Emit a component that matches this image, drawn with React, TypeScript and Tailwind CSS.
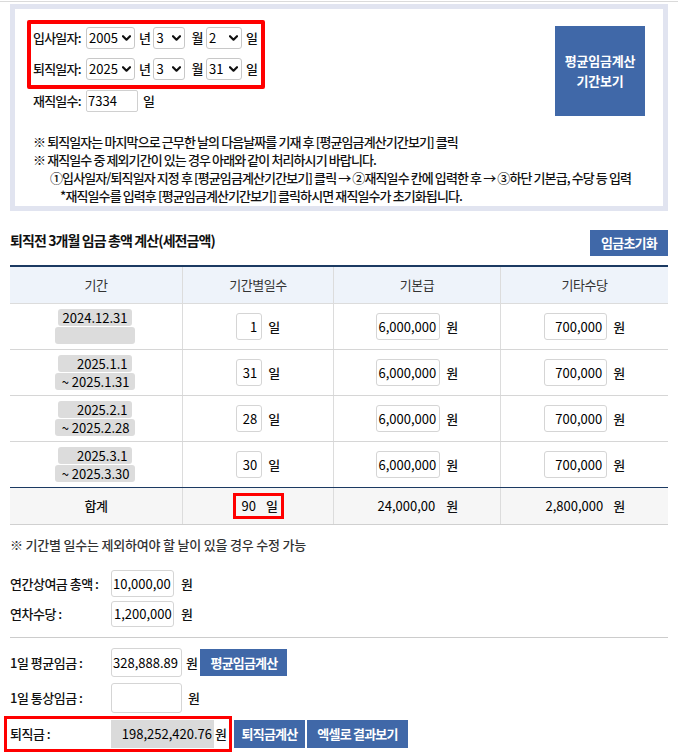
import React from "react";

const Chevron = () => (
  <svg className="absolute right-[4px] top-[8px] pointer-events-none" width="9" height="6" viewBox="0 0 9 6">
    <path d="M1 1.2 L4.5 4.7 L8 1.2" fill="none" stroke="#111" strokeWidth="2.2" strokeLinecap="round" strokeLinejoin="round" />
  </svg>
);

function Sel({ className, value }: { className: string; value: string }) {
  return (
    <div className={"relative h-[22px] " + className}>
      <div className="w-full h-full border border-[#c8c8c8] rounded-[3px] bg-white pl-[2px] text-[13px] font-normal tracking-normal leading-[20px] text-black">
        {value}
      </div>
      <Chevron />
    </div>
  );
}

const rows = [
  { a: "2024.12.31", b: "", d: "1" },
  { a: "2025.1.1", b: "~ 2025.1.31", d: "31" },
  { a: "2025.2.1", b: "~ 2025.2.28", d: "28" },
  { a: "2025.3.1", b: "~ 2025.3.30", d: "30" },
];

const inputBox =
  "h-[27px] border border-[#d5d5d5] rounded-[3px] bg-white text-right font-normal tracking-normal text-[13px] leading-[25px] text-black";

export default function App() {
  return (
    <div className="w-[678px] min-h-[756px] bg-white text-[13px] text-[#111] tracking-[-0.5px] font-['Noto_Sans_CJK_KR','Noto_Sans',sans-serif] font-medium leading-[18px]">
      <div className="pt-[1px]">
        <div className="h-[1px] bg-[#dadada]" />
      </div>
      <div className="mx-[10px] mt-[2px] border-[5px] border-[#e1e4f0] pb-[1px]">
        <div className="flex justify-between pl-[12px] pt-[11px] pr-[18px]">
          <div className="flex flex-col">
            <div className="w-[238px] h-[69px] border-[4px] border-[#ff0000] rounded-[2px] pt-[3px] pl-[2px] flex flex-col gap-[9px]">
              <div className="flex items-center gap-[3px] h-[22px]">
                <span className="w-[50px] tracking-[-0.8px]">입사일자:</span>
                <Sel className="w-[49px]" value="2005" />
                <span className="ml-[1px]">년</span>
                <Sel className="w-[32px]" value="3" />
                <span className="ml-[3px]">월</span>
                <Sel className="w-[36px]" value="2" />
                <span className="ml-[1px]">일</span>
              </div>
              <div className="flex items-center gap-[3px] h-[22px]">
                <span className="w-[50px] tracking-[-0.8px]">퇴직일자:</span>
                <Sel className="w-[49px]" value="2025" />
                <span className="ml-[1px]">년</span>
                <Sel className="w-[32px]" value="3" />
                <span className="ml-[3px]">월</span>
                <Sel className="w-[36px]" value="31" />
                <span className="ml-[1px]">일</span>
              </div>
            </div>
            <div className="flex items-center mt-[1px] pl-[6px] h-[22px] gap-[3px]">
              <span className="w-[50px] tracking-[-0.8px]">재직일수:</span>
              <div className="w-[52px] h-[22px] border border-[#d0d0d0] rounded-[2px] pl-[1px] font-normal tracking-normal leading-[20px] text-black">7334</div>
              <span className="ml-[2px]">일</span>
            </div>
          </div>
          <div className="mt-[6px] w-[90px] h-[90px] bg-[#4068a8] text-white font-bold flex flex-col items-center justify-center text-[13px] leading-[20px] tracking-[-0.2px]">
            <span>평균임금계산</span>
            <span>기간보기</span>
          </div>
        </div>
        <div className="mt-[17px] pl-[18px] text-[13px] tracking-[-0.9px] text-[#111]">
          <div>※ 퇴직일자는 마지막으로 근무한 날의 다음날짜를 기재 후 [평균임금계산기간보기] 클릭</div>
          <div>※ 재직일수 중 제외기간이 있는 경우 아래와 같이 처리하시기 바랍니다.</div>
          <div className="pl-[17px]">①입사일자/퇴직일자 지정 후 [평균임금계산기간보기] 클릭 → ②재직일수 칸에 입력한 후 → ③하단 기본급, 수당 등 입력</div>
          <div className="pl-[27px]">*재직일수를 입력후 [평균임금계산기간보기] 클릭하시면 재직일수가 초기화됩니다.</div>
        </div>
      </div>

      <div className="mx-[10px]">
        <div className="flex justify-between items-center mt-[19px]">
          <span className="text-[14px] font-bold tracking-[-0.9px] text-[#111] mb-[6px] leading-[20px]">퇴직전 3개월 임금 총액 계산(세전금액)</span>
          <div className="w-[78px] h-[26px] bg-[#4068a8] text-white font-bold flex items-center justify-center text-[13px] tracking-[-0.8px]">임금초기화</div>
        </div>

        <div className="mt-[9px] border-t-2 border-[#1b3a62]">
          <div className="grid grid-cols-[173px_151px_167px_167px] h-[37px] bg-[#eef3fa] border-b border-[#dcdcdc] text-[#333] font-normal">
            <div className="flex items-center justify-center border-r border-[#dcdcdc]">기간</div>
            <div className="flex items-center justify-center border-r border-[#dcdcdc]">기간별일수</div>
            <div className="flex items-center justify-center border-r border-[#dcdcdc]">기본급</div>
            <div className="flex items-center justify-center">기타수당</div>
          </div>
          {rows.map((r, i) => (
            <div
              key={i}
              className={
                "grid grid-cols-[173px_151px_167px_167px] h-[46px] border-b " +
                (i === rows.length - 1 ? "border-[#1b3a62]" : "border-[#d6d6d6]")
              }
            >
              <div className="flex flex-col items-center justify-center gap-[1px] border-r border-[#dcdcdc] pr-[3px] font-normal tracking-normal text-black">
                <div className="w-[74px] h-[17px] bg-[#dcdcdc] rounded-[3px] text-right pr-[4px] leading-[17px]">{r.a}</div>
                <div className="w-[80px] h-[17px] bg-[#dcdcdc] rounded-[3px] text-right pr-[5px] leading-[17px]">{r.b}</div>
              </div>
              <div className="flex items-center justify-center gap-[6px] border-r border-[#dcdcdc]">
                <div className={inputBox + " w-[26px] pr-[4px]"}>{r.d}</div>
                <span>일</span>
              </div>
              <div className="flex items-center justify-center gap-[6px] border-r border-[#dcdcdc]">
                <div className={inputBox + " w-[64px] pr-[3px]"}>6,000,000</div>
                <span>원</span>
              </div>
              <div className="flex items-center justify-center gap-[6px]">
                <div className={inputBox + " w-[63px] pr-[4px]"}>700,000</div>
                <span>원</span>
              </div>
            </div>
          ))}
          <div className="grid grid-cols-[173px_151px_167px_167px] h-[37px] bg-[#f6f6f6] border-b border-[#d0d0d0]">
            <div className="flex items-center justify-center border-r border-[#dcdcdc]">합계</div>
            <div className="flex items-center justify-center border-r border-[#dcdcdc]">
              <div className="w-[51px] h-[26px] border-[3px] border-[#ff0000] flex items-center pl-[6px] gap-[10px]">
                <span className="font-normal tracking-normal text-black">90</span>
                <span>일</span>
              </div>
            </div>
            <div className="flex items-center justify-center gap-[6px] border-r border-[#dcdcdc]">
              <div className="w-[64px] text-right pr-[5px] font-normal tracking-normal text-black">24,000,00</div>
              <span>원</span>
            </div>
            <div className="flex items-center justify-center gap-[6px]">
              <div className="w-[63px] text-right pr-[4px] font-normal tracking-normal text-black">2,800,000</div>
              <span>원</span>
            </div>
          </div>
        </div>

        <div className="mt-[11px] text-[#333] tracking-[-0.2px]">※ 기간별 일수는 제외하여야 할 날이 있을 경우 수정 가능</div>

        <div className="mt-[16px] flex items-center">
          <span className="w-[101px]">연간상여금 총액 :</span>
          <div className="w-[63px] h-[27px] border border-[#d5d5d5] rounded-[3px] pl-[1px] font-normal tracking-normal leading-[25px] text-black">10,000,00</div>
          <span className="ml-[7px]">원</span>
        </div>
        <div className="mt-[4px] flex items-center">
          <span className="w-[101px]">연차수당 :</span>
          <div className="w-[63px] h-[26px] border border-[#d5d5d5] rounded-[3px] pl-[2px] font-normal tracking-normal leading-[24px] text-black">1,200,000</div>
          <span className="ml-[7px]">원</span>
        </div>

        <div className="mt-[10px] h-[1px] bg-[#cccccc]" />

        <div className="mt-[10px] flex items-center">
          <span className="w-[101px]">1일 평균임금 :</span>
          <div className="w-[71px] h-[29px] border border-[#d5d5d5] rounded-[3px] pl-[1px] font-normal tracking-normal leading-[27px] text-black">328,888.89</div>
          <span className="ml-[4px]">원</span>
          <div className="ml-[3px] w-[87px] h-[27px] bg-[#4068a8] text-white font-bold flex items-center justify-center tracking-[-0.8px]">평균임금계산</div>
        </div>
        <div className="mt-[6px] flex items-center">
          <span className="w-[101px]">1일 통상임금 :</span>
          <div className="w-[71px] h-[30px] border border-[#d5d5d5] rounded-[3px]" />
          <span className="ml-[6px]">원</span>
        </div>

        <div className="mt-[3px] flex items-center">
          <div className="-ml-[6px] w-[228px] h-[36px] border-[3px] border-[#ff0000] flex items-center pl-[3px]">
            <span className="w-[101px]">퇴직금 :</span>
            <div className="w-[103px] h-[28px] bg-[#dadada] text-right pr-[2px] font-normal tracking-normal leading-[28px] text-black">198,252,420.76</div>
            <span className="ml-[1px]">원</span>
          </div>
          <div className="ml-[2px] w-[71px] h-[28px] bg-[#4068a8] text-white font-bold flex items-center justify-center tracking-[-0.8px]">퇴직금계산</div>
          <div className="ml-[2px] w-[101px] h-[28px] bg-[#4068a8] text-white font-bold flex items-center justify-center tracking-[-0.8px]">엑셀로 결과보기</div>
        </div>
      </div>
    </div>
  );
}
